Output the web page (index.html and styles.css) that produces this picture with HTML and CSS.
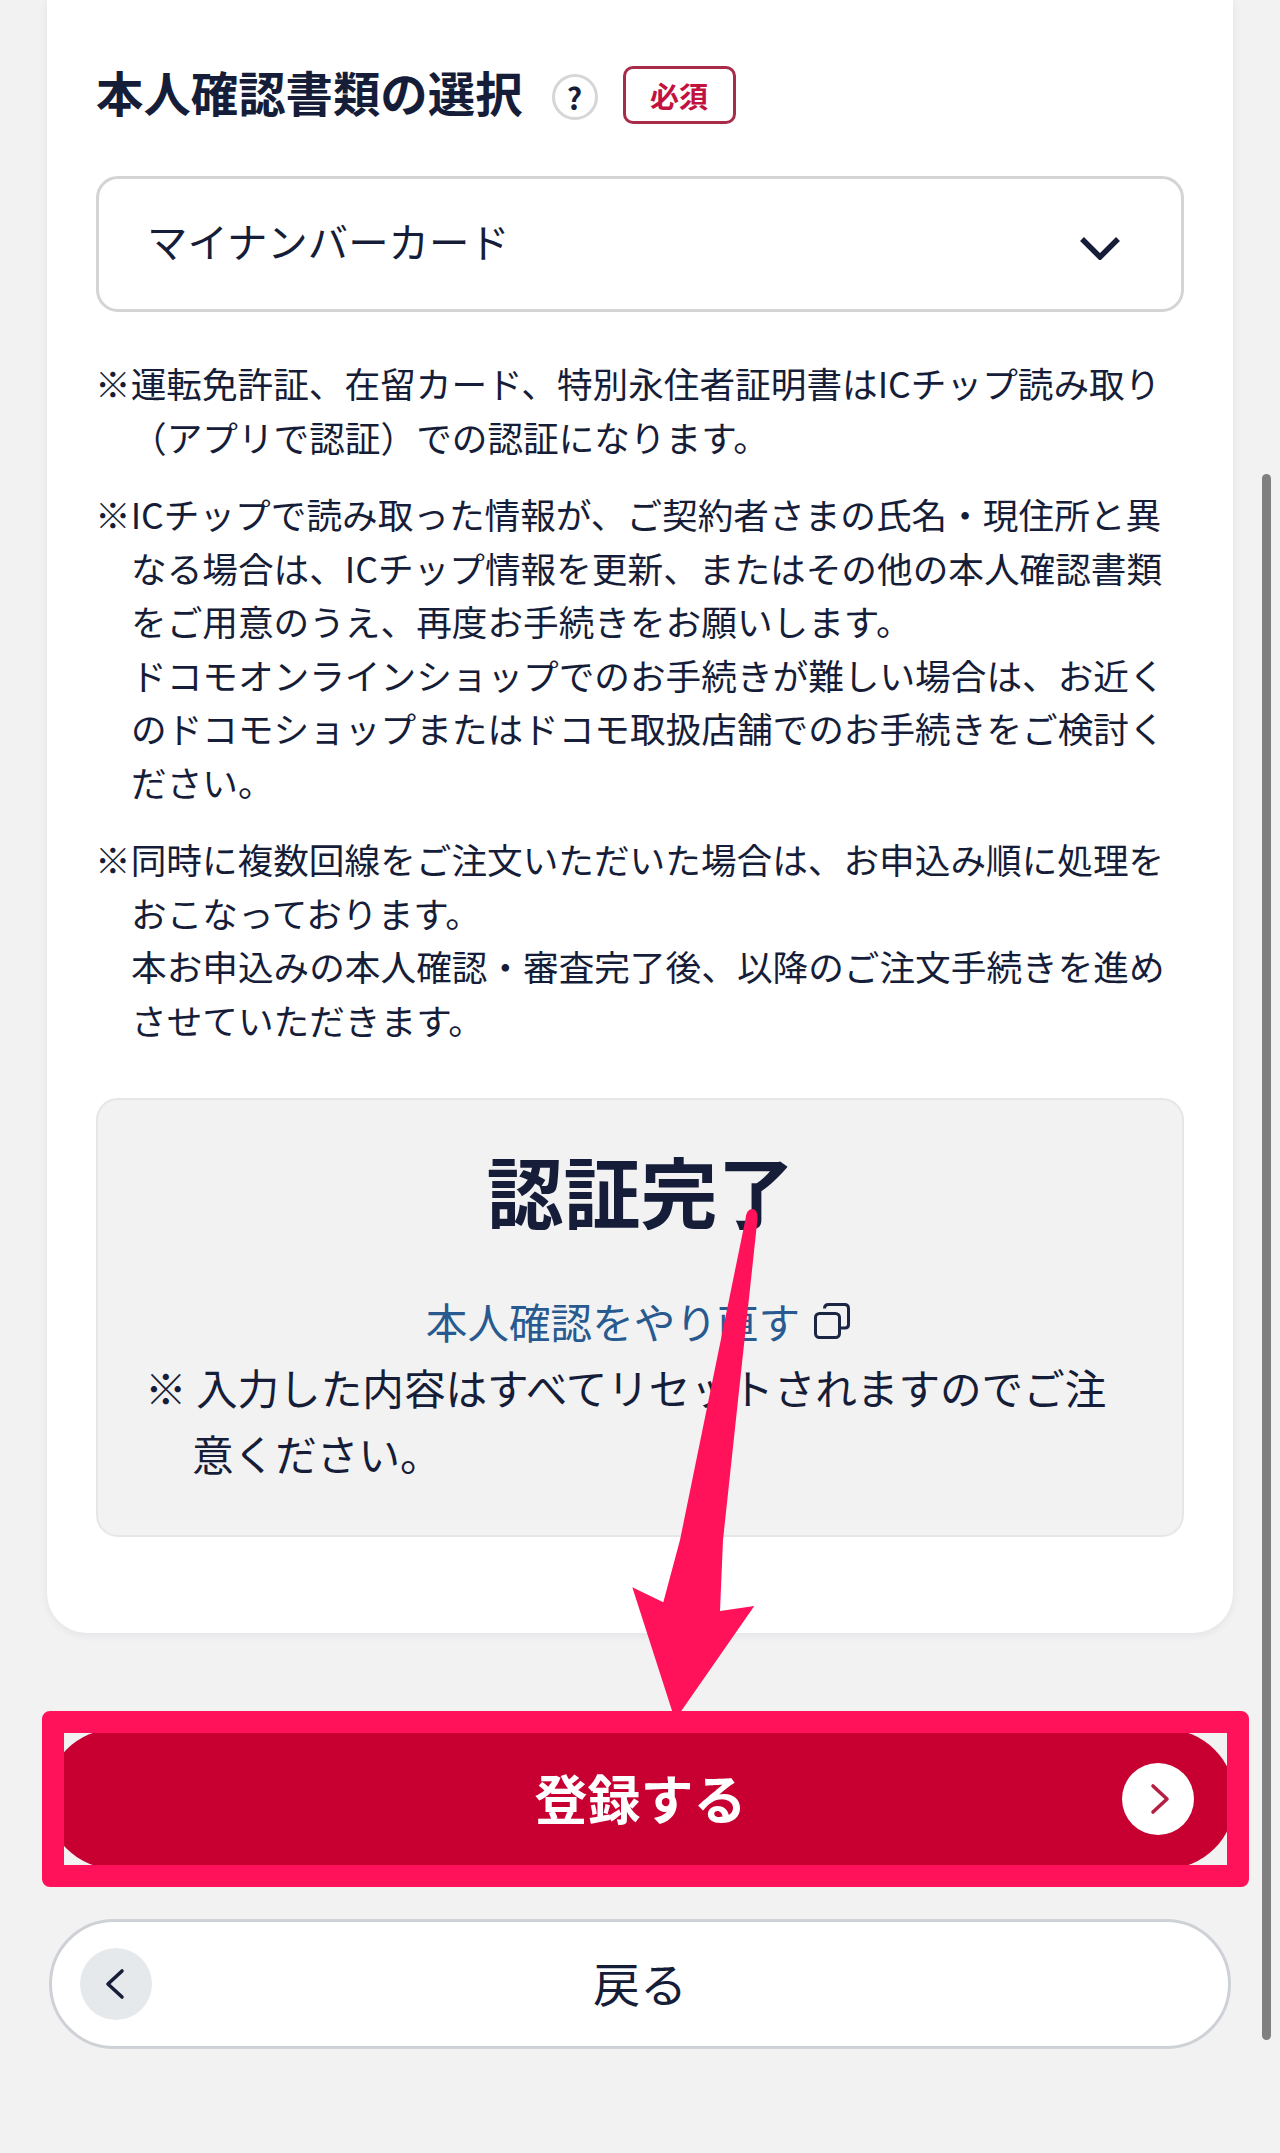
FILE: index.html
```html
<!DOCTYPE html>
<html lang="ja">
<head>
<meta charset="utf-8">
<title>本人確認書類の選択</title>
<link rel="stylesheet" href="styles.css">
</head>
<body>
<div class="page">
  <section class="card">
    <div class="heading-row">
      <h2 class="heading">本人確認書類の選択</h2>
      <span class="help">?</span>
      <span class="required">必須</span>
    </div>
    <div class="select">
      <span class="select-value">マイナンバーカード</span>
      <svg class="select-chevron" viewBox="0 0 42 24" aria-hidden="true"><path d="M3 3 L21 21 L39 3"/></svg>
    </div>
    <div class="notes">
      <p class="note">※運転免許証、在留カード、特別永住者証明書はICチップ読み取り<br>（アプリで認証）での認証になります。</p>
      <p class="note">※ICチップで読み取った情報が、ご契約者さまの氏名・現住所と異<br>なる場合は、ICチップ情報を更新、またはその他の本人確認書類<br>をご用意のうえ、再度お手続きをお願いします。<br>ドコモオンラインショップでのお手続きが難しい場合は、お近く<br>のドコモショップまたはドコモ取扱店舗でのお手続きをご検討く<br>ださい。</p>
      <p class="note">※同時に複数回線をご注文いただいた場合は、お申込み順に処理を<br>おこなっております。<br>本お申込みの本人確認・審査完了後、以降のご注文手続きを進め<br>させていただきます。</p>
    </div>
    <div class="status">
      <div class="status-title">認証完了</div>
      <div class="status-link-row">
        <a class="status-link">本人確認をやり直す</a>
        <svg class="copy-icon" viewBox="0 0 36 36" aria-hidden="true"><rect x="1.5" y="10.5" width="24" height="24" rx="4"/><path d="M10.5 5.5 Q10.5 1.5 14.5 1.5 H30.5 Q34.5 1.5 34.5 5.5 V21.5 Q34.5 25 31 25 H26"/></svg>
      </div>
      <p class="status-note">※ 入力した内容はすべてリセットされますのでご注<br>意ください。</p>
    </div>
  </section>
  <button class="btn btn-primary">登録する<span class="btn-circle btn-circle-next"><svg viewBox="0 0 20 32" aria-hidden="true"><path d="M3 3 L17 16 L3 29"/></svg></span></button>
  <button class="btn btn-back"><span class="btn-circle btn-circle-back"><svg viewBox="0 0 20 32" aria-hidden="true"><path d="M17 3 L3 16 L17 29"/></svg></span>戻る</button>
  <div class="highlight"></div>
  <svg class="arrow" viewBox="0 0 1280 2153" aria-hidden="true"><path d="M745.5 1219 Q746.5 1209 752 1209 Q758 1209 757.5 1219 L723 1540 L720 1611 L754.3 1606 L675 1720 L632.3 1587.3 L663.3 1602.3 L680 1540 Z"/></svg>
  <div class="scrollbar"></div>
</div>
</body>
</html>
```
FILE: styles.css
```css
* { box-sizing: border-box; }
html, body { margin: 0; padding: 0; }
body {
  background: #f2f2f3;
  color: #161d38;
  font-family: "Noto Sans CJK JP", "Noto Sans", sans-serif;
}
.page {
  position: relative;
  width: 1280px;
  height: 2153px;
  overflow: hidden;
}
.card {
  margin-left: 47px;
  width: 1186px;
  padding: 66px 49px 96px;
  background: #fff;
  border-radius: 0 0 40px 40px;
  box-shadow: 0 2px 8px rgba(20, 30, 60, 0.07);
}
.heading-row {
  display: flex;
  align-items: center;
  height: 58px;
}
.heading {
  margin: 0;
  font-size: 47.4px;
  line-height: 58px;
  font-weight: 700;
  white-space: nowrap;
  position: relative;
  top: -3px;
}
.help {
  display: flex;
  align-items: center;
  justify-content: center;
  width: 46px;
  height: 46px;
  margin-left: 29px;
  margin-top: 4px;
  border: 3px solid #d6d6d6;
  border-radius: 50%;
  font-size: 30px;
  font-weight: 700;
  line-height: 1;
}
.required {
  display: flex;
  align-items: center;
  justify-content: center;
  width: 113px;
  height: 58px;
  margin-left: 25px;
  border: 3px solid #a82c48;
  border-radius: 10px;
  color: #c2123f;
  font-size: 29px;
  font-weight: 700;
  line-height: 1;
}
.select {
  display: flex;
  align-items: center;
  justify-content: space-between;
  height: 136px;
  margin-top: 52px;
  padding: 0 60px 0 48px;
  border: 3px solid #d4d4d6;
  border-radius: 22px;
}
.select-value {
  font-size: 40.4px;
  line-height: 60px;
  position: relative;
  top: -3px;
}
.select-chevron {
  width: 42px;
  height: 24px;
  position: relative;
  top: 4px;
  fill: none;
  stroke: #161d38;
  stroke-width: 5.5;
}
.notes {
  margin-top: 44px;
  display: flex;
  flex-direction: column;
  gap: 24px;
}
.note {
  margin: 0 0 0 -1px;
  padding-left: 36px;
  text-indent: -36px;
  font-size: 35.65px;
  line-height: 53.5px;
  white-space: nowrap;
}
.status {
  margin-top: 52px;
  height: 439px;
  padding: 42px 46px 0 47px;
  background: #f2f2f3;
  border: 2px solid #e6e6e8;
  border-radius: 22px;
}
.status-title {
  text-align: center;
  font-size: 77px;
  line-height: 96px;
  font-weight: 700;
}
.status-link-row {
  display: flex;
  align-items: center;
  justify-content: center;
  gap: 14px;
  margin-top: 53px;
  padding-right: 5px;
  height: 60px;
}
.status-link {
  color: #285a8f;
  font-size: 41.6px;
  line-height: 60px;
}
.copy-icon {
  width: 36px;
  height: 36px;
  fill: none;
  stroke: #1a2642;
  stroke-width: 3;
}
.status-note {
  margin: 3px 0 0;
  padding-left: 47px;
  text-indent: -47px;
  font-size: 41.6px;
  line-height: 66px;
  white-space: nowrap;
}
.btn {
  display: flex;
  align-items: center;
  justify-content: center;
  position: relative;
  padding: 0 0 4px;
  font-family: inherit;
}
.btn-primary {
  width: 1189px;
  height: 140px;
  margin-top: 96px;
  margin-left: 46px;
  background: #c70031;
  border: 0;
  border-radius: 70px;
  color: #fff;
  font-size: 53px;
  font-weight: 700;
}
.btn-back {
  width: 1182px;
  height: 130px;
  margin-top: 50px;
  margin-left: 49px;
  padding-bottom: 6px;
  background: #fff;
  border: 3px solid #ced1d5;
  border-radius: 65px;
  color: #161d38;
  font-size: 47px;
  font-weight: 400;
}
.btn-circle {
  position: absolute;
  top: 50%;
  width: 72px;
  height: 72px;
  margin-top: -36px;
  border-radius: 50%;
  display: flex;
  align-items: center;
  justify-content: center;
}
.btn-circle svg {
  width: 20px;
  height: 32px;
  fill: none;
  stroke-width: 3.6;
  stroke-linecap: round;
  stroke-linejoin: round;
}
.btn-circle-next {
  right: 41px;
  background: #fff;
}
.btn-circle-next svg {
  stroke: #b52040;
  margin-left: 3px;
}
.btn-circle-back {
  left: 28px;
  background: #e6e9ec;
}
.btn-circle-back svg {
  stroke: #161d38;
  margin-right: 2px;
}
.highlight {
  position: absolute;
  left: 42px;
  top: 1711px;
  width: 1207px;
  height: 176px;
  border: 22px solid #ff1259;
  border-radius: 8px;
}
.arrow {
  position: absolute;
  left: 0;
  top: 0;
  width: 1280px;
  height: 2153px;
  fill: #ff1259;
}
.scrollbar {
  position: absolute;
  left: 1262px;
  top: 474px;
  width: 9px;
  height: 1566px;
  background: #808080;
  border-radius: 5px;
}
```
